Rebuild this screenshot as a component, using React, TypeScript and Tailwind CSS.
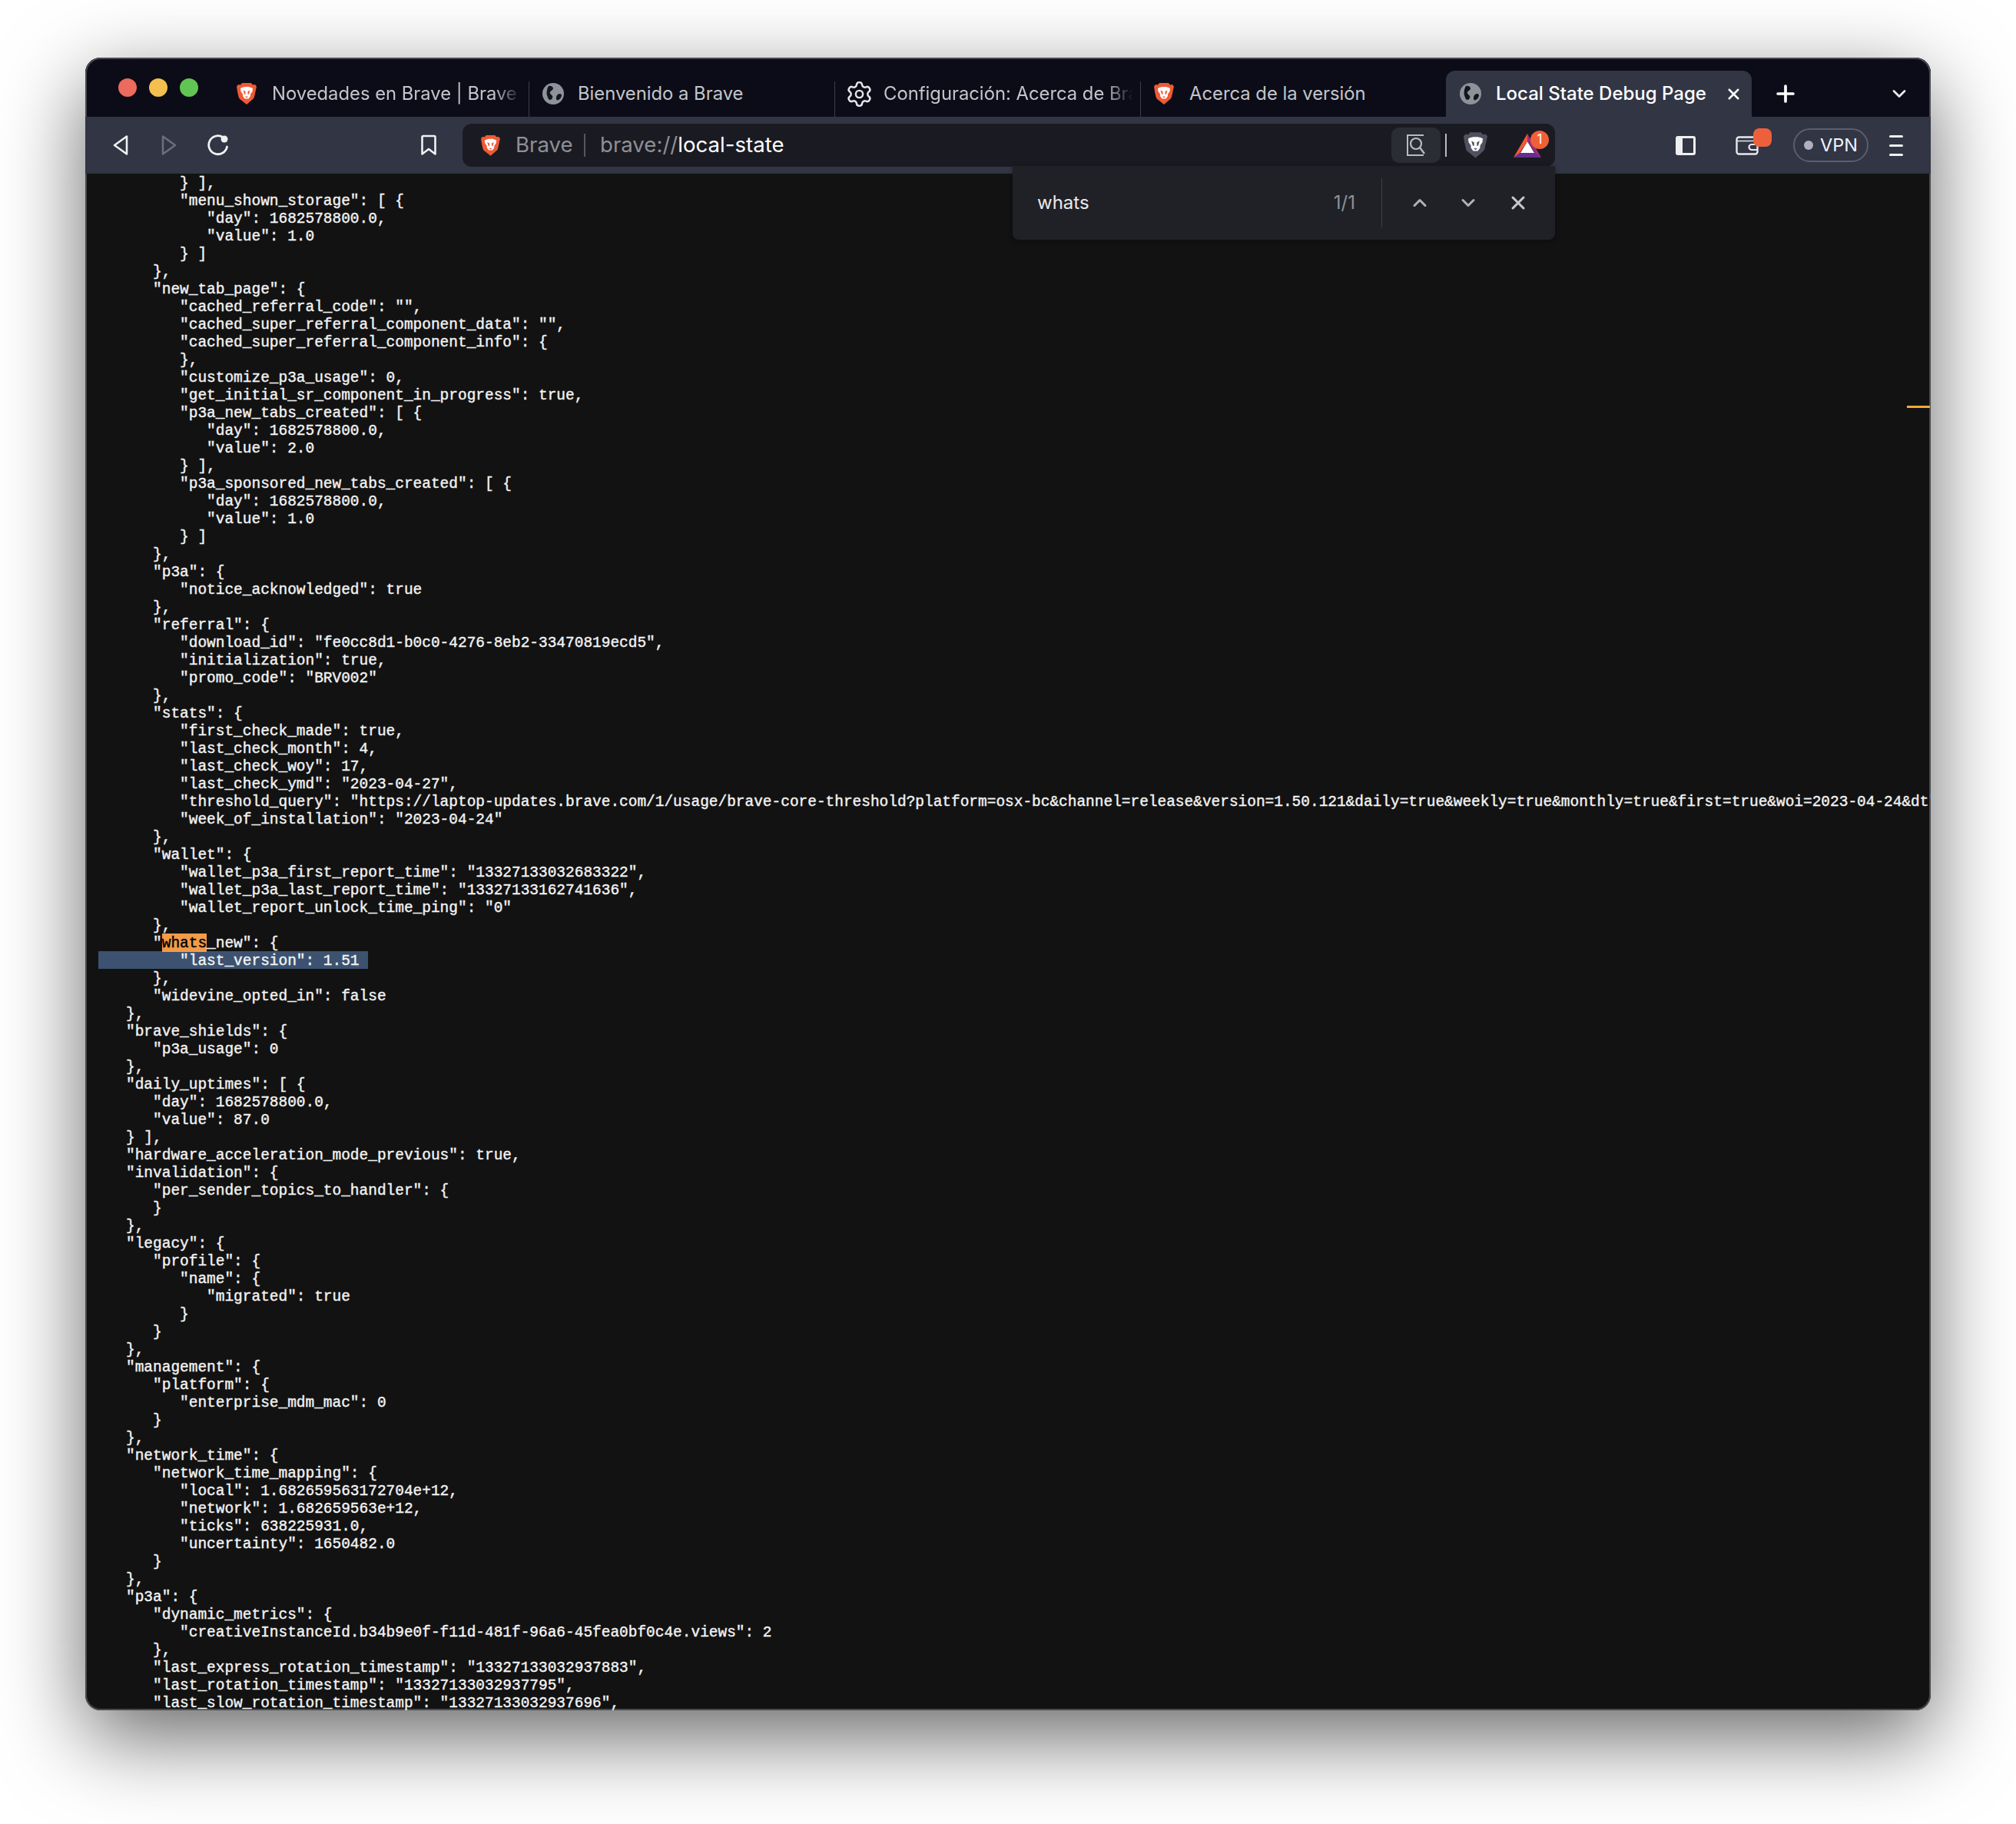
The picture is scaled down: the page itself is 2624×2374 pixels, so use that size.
import { ChevronDown, ChevronUp, Plus, Settings, X } from "lucide-react";

const LINES = `         } ],
         "menu_shown_storage": [ {
            "day": 1682578800.0,
            "value": 1.0
         } ]
      },
      "new_tab_page": {
         "cached_referral_code": "",
         "cached_super_referral_component_data": "",
         "cached_super_referral_component_info": {
         },
         "customize_p3a_usage": 0,
         "get_initial_sr_component_in_progress": true,
         "p3a_new_tabs_created": [ {
            "day": 1682578800.0,
            "value": 2.0
         } ],
         "p3a_sponsored_new_tabs_created": [ {
            "day": 1682578800.0,
            "value": 1.0
         } ]
      },
      "p3a": {
         "notice_acknowledged": true
      },
      "referral": {
         "download_id": "fe0cc8d1-b0c0-4276-8eb2-33470819ecd5",
         "initialization": true,
         "promo_code": "BRV002"
      },
      "stats": {
         "first_check_made": true,
         "last_check_month": 4,
         "last_check_woy": 17,
         "last_check_ymd": "2023-04-27",
         "threshold_query": "https://laptop-updates.brave.com/1/usage/brave-core-threshold?platform=osx-bc&channel=release&version=1.50.121&daily=true&weekly=true&monthly=true&first=true&woi=2023-04-24&dt",
         "week_of_installation": "2023-04-24"
      },
      "wallet": {
         "wallet_p3a_first_report_time": "13327133032683322",
         "wallet_p3a_last_report_time": "13327133162741636",
         "wallet_report_unlock_time_ping": "0"
      },
      "whats_new": {
         "last_version": 1.51
      },
      "widevine_opted_in": false
   },
   "brave_shields": {
      "p3a_usage": 0
   },
   "daily_uptimes": [ {
      "day": 1682578800.0,
      "value": 87.0
   } ],
   "hardware_acceleration_mode_previous": true,
   "invalidation": {
      "per_sender_topics_to_handler": {
      }
   },
   "legacy": {
      "profile": {
         "name": {
            "migrated": true
         }
      }
   },
   "management": {
      "platform": {
         "enterprise_mdm_mac": 0
      }
   },
   "network_time": {
      "network_time_mapping": {
         "local": 1.682659563172704e+12,
         "network": 1.682659563e+12,
         "ticks": 638225931.0,
         "uncertainty": 1650482.0
      }
   },
   "p3a": {
      "dynamic_metrics": {
         "creativeInstanceId.b34b9e0f-f11d-481f-96a6-45fea0bf0c4e.views": 2
      },
      "last_express_rotation_timestamp": "13327133032937883",
      "last_rotation_timestamp": "13327133032937795",
      "last_slow_rotation_timestamp": "13327133032937696",`.split("\n");

function Lion({ size = 24, shield = "#ef5a35", face = "#ffffff" }: { size?: number; shield?: string; face?: string }) {
  return (
    <svg width={size} height={size * 1.15} viewBox="0 0 26 30">
      <path d="M7 1h12l2 2.500 3-.5 2 2.500-1.500 7-1.500 6.500c-.5 2-1.500 3-3 4L13 29 5.500 23c-1.500-1-2.500-2-3-4L1 12.500 0 5.500 2 3l3 .5z" fill={shield} />
      <path d="M7 7l3.500-1h5L19 7l2 1-.5 4-2.500 3.500V18l-2.500 3.500h-5L8 18v-2.500L5.500 12 5 8z" fill={face} />
      <path d="M8.500 10.500l3 1.500v4l-1.500-.5zM17.500 10.500l-3 1.500v4l1.500-.5z" fill={shield} />
      <path d="M11 18.500h4L13 20.500z" fill={shield} />
    </svg>
  );
}

function Globe({ size = 28 }: { size?: number }) {
  return (
    <svg width={size} height={size} viewBox="0 0 28 28">
      <circle cx="14" cy="14" r="14" fill="#8e9299" />
      <path d="M8 4c3-1 6 1 6 3s-3 3-4 5 2 3 3 5-1 5-3 5-3-3-4-6 0-9 2-12zM20 15c2-2 5-1 5 1s-2 5-4 6-3 0-3-2 0-3 2-5z" fill="#14151f" />
    </svg>
  );
}

function Tab({ icon, title, fade = true }: { icon: React.ReactNode; title: string; fade?: boolean }) {
  return (
    <div className="w-[397px] h-[60px] flex items-center shrink-0">
      <div className="w-[63px] pl-[17px] flex items-center justify-start shrink-0">{icon}</div>
      <div
        className={
          "w-[328px] overflow-hidden whitespace-nowrap text-[23.8px] text-[#c3c5cb] " +
          (fade ? "[mask-image:linear-gradient(to_right,black_88%,transparent_99%)]" : "")
        }
      >
        {title}
      </div>
    </div>
  );
}

function Sep() {
  return <div className="w-px h-[46px] bg-[#3b3e4a] shrink-0" />;
}

function Line({ text, index }: { text: string; index: number }) {
  if (index === 43) {
    return (
      <div className="h-[23px] pt-[2px]">
        {`      "`}
        <span className="bg-[#f39b49] text-black pt-[2px] [-webkit-text-stroke:0.4px_#000000]">whats</span>
        {`_new": {`}
      </div>
    );
  }
  if (index === 44) {
    return (
      <div className="h-[23px] pt-[2px] w-[351px] -ml-[1px] pl-[1px] bg-[#3c5270]">{text}</div>
    );
  }
  return <div className="h-[23px] pt-[2px]">{text}</div>;
}

export default function App() {
  return (
    <div className="w-[2624px] h-[2374px] bg-white pt-[75px] pl-[111px] overflow-hidden font-['Inter',sans-serif]">
      <div className="relative w-[2402px] h-[2151px] rounded-[20px] overflow-hidden flex flex-col bg-[#121212] shadow-[0_35px_110px_rgba(0,0,0,0.6)] outline-[2px] -outline-offset-[2px] outline-[#48494e]">
        {/* tab strip */}
        <div className="h-[77px] bg-[#0b0c17] flex items-end shrink-0 pl-[43px]">
          <div className="flex gap-[16px] h-[77px] items-center w-[137px]">
            <div className="w-[24px] h-[24px] rounded-full bg-[#ec6a5e]" />
            <div className="w-[24px] h-[24px] rounded-full bg-[#f4bf4f]" />
            <div className="w-[24px] h-[24px] rounded-full bg-[#61c554]" />
          </div>
          <Tab icon={<Lion size={26} />} title="Novedades en Brave | Brave Browser" />
          <Sep />
          <Tab icon={<Globe />} title="Bienvenido a Brave" fade={false} />
          <Sep />
          <Tab icon={<Settings size={37} strokeWidth={1.6} className="text-[#e4e5e8] -ml-[4px]" />} title="Configuración: Acerca de Brave" />
          <Sep />
          <Tab icon={<Lion size={26} />} title="Acerca de la versión" fade={false} />
          <div className="w-[398px] h-[60px] rounded-t-[12px] bg-[#313544] flex items-center shrink-0 pl-[18px] pr-[12px]">
            <Globe />
            <span className="ml-[19px] text-[24px] font-medium text-white whitespace-nowrap flex-1">Local State Debug Page</span>
            <X size={23} strokeWidth={2.6} className="text-white" />
          </div>
          <div className="h-[60px] flex items-center pl-[27px]">
            <Plus size={34} strokeWidth={2.6} className="text-white" />
          </div>
          <div className="h-[60px] flex items-center pl-[117px]">
            <ChevronDown size={28} strokeWidth={2.4} className="text-[#e8e9ec]" />
          </div>
        </div>

        {/* toolbar */}
        <div className="h-[74px] bg-[#313544] flex items-center shrink-0 relative">
          <div className="w-[491px] h-full flex items-center shrink-0">
            <svg width="22" height="28" viewBox="0 0 22 28" className="ml-[35px]">
              <path d="M19 2.500v23L3 14z" fill="none" stroke="#f1f1f3" strokeWidth="2.600" strokeLinejoin="round" />
            </svg>
            <svg width="22" height="28" viewBox="0 0 22 28" className="ml-[41px]">
              <path d="M3 2.500v23L19 14z" fill="none" stroke="#6b6e7b" strokeWidth="2.600" strokeLinejoin="round" />
            </svg>
            <svg width="30" height="30" viewBox="0 0 30 30" className="ml-[38px]">
              <path d="M21 4.500A12 12 0 1 0 26.500 17" fill="none" stroke="#f1f1f3" strokeWidth="2.800" strokeLinecap="round" />
              <circle cx="23" cy="7" r="4.500" fill="#f1f1f3" />
            </svg>
            <svg width="22" height="28" viewBox="0 0 22 28" className="ml-[248px]">
              <path d="M2.500 3.500a1.500 1.500 0 0 1 1.500-1.500h14a1.500 1.500 0 0 1 1.500 1.500V25.500L11 19 2.500 25.500z" fill="none" stroke="#f1f1f3" strokeWidth="2.600" strokeLinejoin="round" />
            </svg>
          </div>

          {/* url bar */}
          <div className="w-[1422px] h-[56px] bg-[#1a1b22] rounded-[12px] flex items-center shrink-0">
            <div className="ml-[24px] w-[45px] shrink-0">
              <Lion size={25} />
            </div>
            <span className="text-[27.6px] text-[#8e9096] w-[89px] shrink-0">Brave</span>
            <div className="w-[2px] h-[30px] bg-[#55575f] shrink-0" />
            <span className="ml-[19px] text-[27.6px] text-[#8e9096]">brave://</span>
            <span className="text-[27.6px] text-white">local-state</span>
            <div className="flex-1" />
            <div className="w-[64px] h-[46px] rounded-[10px] bg-[#2b2d35] flex items-center justify-center shrink-0">
              <svg width="28" height="30" viewBox="0 0 28 30">
                <path d="M24 2H3v26h21" fill="none" stroke="#b9bbc3" strokeWidth="2" />
                <circle cx="14" cy="13" r="7" fill="none" stroke="#b9bbc3" strokeWidth="2.200" />
                <path d="M19 18l6 8" stroke="#b9bbc3" strokeWidth="2.400" />
              </svg>
            </div>
            <div className="ml-[6px] w-[2px] h-[30px] bg-[#b9bbc3] shrink-0" />
            <div className="ml-[22px] shrink-0">
              <Lion size={31} shield="#4f5160" />
            </div>
            <div className="relative ml-[34px] mr-[18px] w-[36px] h-[31px] shrink-0">
              <svg width="36" height="31" viewBox="0 0 36 31">
                <path d="M0 31H36L28 24H8z" fill="#662d91" />
                <path d="M18 10L9 25H27z" fill="#ffffff" />
                <path d="M18 0L0 31 8 25 18 10z" fill="#ef5a35" />
                <path d="M18 0L36 31 28 25 18 10z" fill="#9e2a7c" />
              </svg>
              <div className="absolute -top-[4px] left-[22px] w-[24px] h-[24px] rounded-full bg-[#ef6036] flex items-center justify-center text-[17px] text-white leading-none">1</div>
            </div>
          </div>

          {/* right actions */}
          <div className="ml-[157px] w-[26px] h-[25px] rounded-[3px] border-[3px] border-[#efeff1] border-l-[9px] shrink-0" />
          <div className="relative ml-[52px] w-[30px] h-[25px] shrink-0">
            <svg width="30" height="25" viewBox="0 0 30 25" className="block">
              <rect x="1.500" y="1.500" width="27" height="22" rx="3" fill="none" stroke="#e8e9ec" strokeWidth="2.400" />
              <path d="M2 6.500h26" stroke="#e8e9ec" strokeWidth="1.600" />
              <path d="M28 11h-7a3 3 0 0 0 0 7h7" fill="none" stroke="#e8e9ec" strokeWidth="2.200" />
            </svg>
            <div className="absolute -top-[10px] left-[23px] w-[24px] h-[24px] rounded-[8px] bg-[#ee603b]" />
          </div>
          <div className="ml-[45px] w-[98px] h-[44px] rounded-full border-[2px] border-[#5b5e6c] flex items-center shrink-0 pl-[12px]">
            <div className="w-[12px] h-[12px] rounded-full bg-[#aeb0c1]" />
            <span className="ml-[9px] text-[23.5px] text-[#f1f3fb]">VPN</span>
          </div>
          <div className="ml-[27px] w-[18px] flex flex-col gap-[9px] shrink-0">
            <div className="h-[3px] rounded-sm bg-[#f1f1f3]" />
            <div className="h-[3px] rounded-sm bg-[#f1f1f3]" />
            <div className="h-[3px] rounded-sm bg-[#f1f1f3]" />
          </div>
        </div>

        {/* find bar */}
        <div className="absolute left-[1207px] top-[141px] w-[706px] h-[96px] bg-[#202126] rounded-b-[8px] shadow-[0_2px_6px_rgba(0,0,0,0.35)] flex items-center pr-[34px] z-10">
          <span className="ml-[32px] text-[24px] text-[#e9e9ec] flex-1">whats</span>
          <span className="text-[24px] text-[#8f9197]">1/1</span>
          <div className="ml-[34px] w-px h-[64px] bg-[#3c3e45]" />
          <ChevronUp size={28} strokeWidth={2.6} className="ml-[35px] text-[#b0b2b8]" />
          <ChevronDown size={28} strokeWidth={2.6} className="ml-[35px] text-[#b0b2b8]" />
          <X size={28} strokeWidth={2.6} className="ml-[37px] text-[#c6c8cd]" />
        </div>

        {/* page */}
        <div className="relative flex-1 min-h-0 overflow-hidden pl-[18px] font-['Liberation_Mono',monospace] text-[19.47px] leading-[23px] text-[#f2f2f2] whitespace-pre [-webkit-text-stroke:0.4px_#f2f2f2]">
          {LINES.map((l, i) => (
            <Line key={i} text={l} index={i} />
          ))}
          <div className="absolute right-[1px] top-[302px] w-[30px] h-[3px] bg-[#f4a93a]" />
        </div>
      </div>
    </div>
  );
}
